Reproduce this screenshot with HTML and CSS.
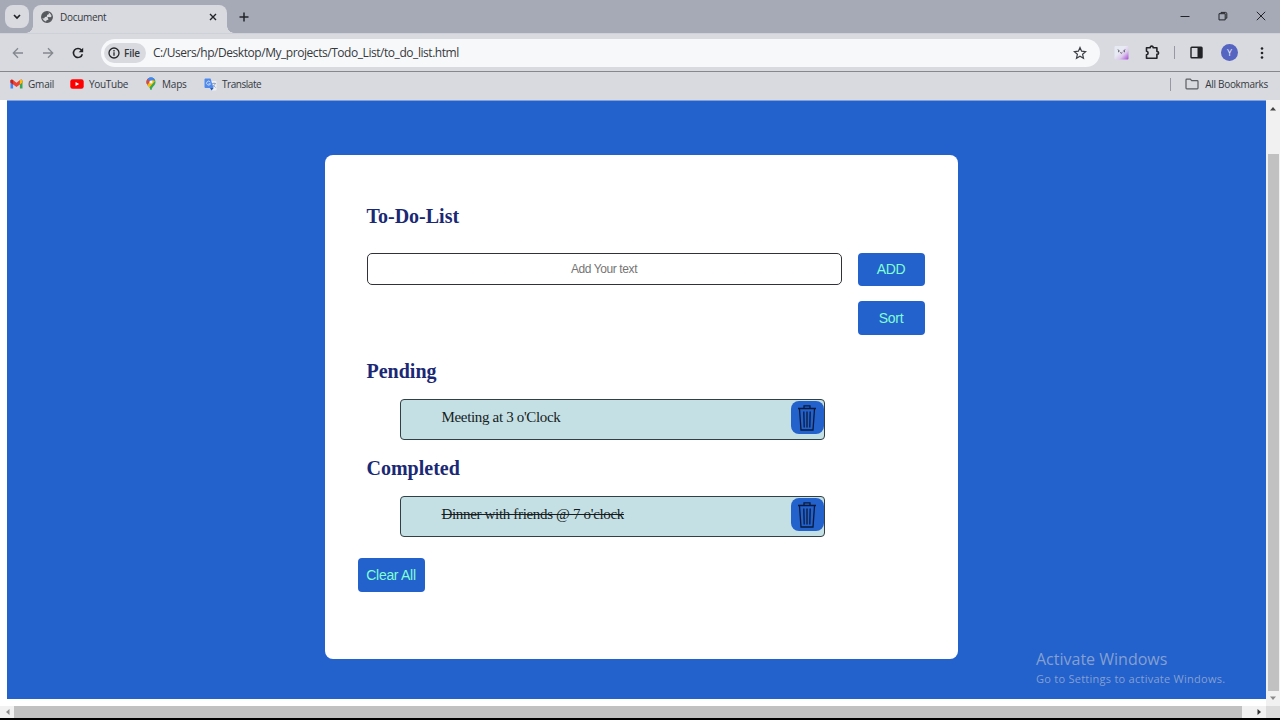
FILE: index.html
```html
<!DOCTYPE html>
<html lang="en">
<head>
<meta charset="utf-8">
<title>Document</title>
<link rel="stylesheet" href="styles.css">
</head>
<body>
<div class="browser">
  <header class="tabstrip">
    <button class="tab-search" aria-label="Search tabs"><svg width="8" height="6" viewBox="0 0 8 6"><path d="M1 1l3 3 3-3" fill="none" stroke="#202226" stroke-width="1.7"/></svg></button>
    <div class="tab">
      <svg class="globe" width="12" height="12" viewBox="0 0 12 12"><circle cx="6" cy="6" r="5.3" fill="#d8dae0" stroke="#56595e" stroke-width="1.3"/><path d="M1 4C3 1 5 .5 7.5 1L8 3 6 4v1.5L4 6 3 7.5 1 7z" fill="#56595e"/><path d="M6.5 6l3 .3L11.3 5 11 8 8 11 5 11.3 5.3 9.5 7.5 8.5z" fill="#56595e"/></svg>
      <span class="tab-title">Document</span>
      <svg width="8" height="8" viewBox="0 0 8 8"><path d="M1 1l6 6M7 1L1 7" stroke="#222428" stroke-width="1.4"/></svg>
    </div>
    <svg class="new-tab" width="10" height="10" viewBox="0 0 10 10"><path d="M5 .5v9M.5 5h9" stroke="#222428" stroke-width="1.5"/></svg>
    <div class="window-controls">
      <svg width="10" height="10" viewBox="0 0 10 10"><path d="M.5 5.5h9" stroke="#222428"/></svg>
      <svg width="10" height="10" viewBox="0 0 10 10"><path d="M1 2.7h6.2v6.2H1zM3 2.5V1.4h4.5q1.3 0 1.3 1.3v4.5H7.5" fill="none" stroke="#222428" stroke-width="1"/></svg>
      <svg width="10" height="10" viewBox="0 0 10 10"><path d="M.8.8l8.4 8.4M9.2.8L.8 9.2" stroke="#222428" stroke-width="1"/></svg>
    </div>
  </header>

  <div class="toolbar">
    <div class="nav">
      <svg width="12" height="12" viewBox="0 0 12 12"><path d="M11 6H1.5M6 1.3L1.3 6 6 10.7" fill="none" stroke="#85888e" stroke-width="1.3"/></svg>
      <svg width="12" height="12" viewBox="0 0 12 12"><path d="M1 6h9.500M6 1.300L10.700 6 6 10.700" fill="none" stroke="#85888e" stroke-width="1.300"/></svg>
      <svg width="12" height="12" viewBox="0 0 12 12"><path d="M10.300 7.200A4.500 4.500 0 1 1 9.500 3.200" fill="none" stroke="#202226" stroke-width="1.600"/><path d="M11.200.8v4.500H6.700z" fill="#202226"/></svg>
    </div>
    <div class="omnibox">
      <span class="file-chip"><svg width="12" height="12" viewBox="0 0 12 12"><circle cx="6" cy="6" r="5" fill="none" stroke="#222428" stroke-width="1.300"/><path d="M6 5.300v3.500M6 3.100v1.300" stroke="#222428" stroke-width="1.300"/></svg><span class="chip-text">File</span></span>
      <span class="url">C:/Users/hp/Desktop/My_projects/Todo_List/to_do_list.html</span>
      <svg class="star" width="14" height="14" viewBox="0 0 14 14"><path d="M7 1.500l1.600 3.700 4 .4-3 2.700.9 4L7 10.200l-3.500 2.100.9-4-3-2.700 4-.4z" fill="none" stroke="#3c3f44" stroke-width="1.200"/></svg>
    </div>
    <div class="actions">
      <svg class="act-ext" width="15" height="15" viewBox="0 0 15 15"><defs><linearGradient id="ext" x1="0" y1="0" x2="1" y2="1"><stop offset=".4" stop-color="#e8eaf3"/><stop offset=".65" stop-color="#dccbed"/><stop offset="1" stop-color="#a445d4"/></linearGradient></defs><rect x=".5" y="1" width="14" height="13.500" rx="1" fill="url(#ext)"/><path d="M4 4.500l1.300 1.700L4 7M11 4.500L9.700 6.200 11 7M6.300 7.500l1 .7 1-.7" fill="none" stroke="#41414b" stroke-width=".9"/></svg>
      <svg class="act-puzzle" width="15" height="15" viewBox="0 0 15 15"><path d="M1.500 2.800h3.800q-.1-1.700 1.400-1.700T8.100 2.800h3.800v3.700q1.700 0 1.700 1.400t-1.700 1.400v4H1.500V9.800q1.600-.2 1.600-1.800T1.500 6.200z" fill="none" stroke="#202226" stroke-width="1.600" stroke-linejoin="round"/></svg>
      <i class="sep"></i>
      <svg class="act-panel" width="13" height="13" viewBox="0 0 13 13"><rect x="1" y="1.200" width="11" height="10.500" rx=".8" fill="none" stroke="#202226" stroke-width="1.400"/><path d="M7.500 1H12v11H7.500z" fill="#202226"/></svg>
      <span class="avatar">Y</span>
      <svg class="act-menu" width="4" height="14" viewBox="0 0 4 14"><g fill="#202226"><circle cx="2" cy="2.500" r="1.300"/><circle cx="2" cy="7" r="1.300"/><circle cx="2" cy="11.500" r="1.300"/></g></svg>
    </div>
  </div>

  <nav class="bookmarks">
    <a class="bookmark gmail"><svg width="13" height="10" viewBox="0 0 13 10"><path d="M.5 2v7.500h2.600V3z" fill="#4285f4"/><path d="M12.500 2v7.500H9.900V3z" fill="#34a853"/><path d="M.5 3.500V1.500Q1.300 0 3 1l3.500 2.800L10 1q1.700-1 2.500.5v2L6.500 8z" fill="#ea4335"/><path d="M9.900 1.100q2-1.100 2.600.5v2L9.900 5.500z" fill="#fbbc04"/><path d="M.5 3.500v-2q.6-1.500 2.600-.4v4.400z" fill="#c5221f"/></svg><span>Gmail</span></a>
    <a class="bookmark youtube"><svg width="14" height="10" viewBox="0 0 14 10"><rect x=".3" y=".2" width="13.400" height="9.600" rx="2.300" fill="#f00"/><path d="M5.500 2.900v4.200L9.200 5z" fill="#fff"/></svg><span>YouTube</span></a>
    <a class="bookmark maps"><svg width="10" height="14" viewBox="0 0 10 14"><defs><clipPath id="pin"><path d="M5 .5A4.500 4.500 0 0 1 9.500 5C9.500 8.500 6 9.500 5.500 13h-1C4 9.500.5 8.500.5 5A4.500 4.500 0 0 1 5 .5z"/></clipPath></defs><g clip-path="url(#pin)"><path d="M0 0h10v14H0z" fill="#34a853"/><path d="M0 8.700L9.500 0H0z" fill="#4285f4"/><path d="M0 0l5 5-4 4-2-3z" fill="#ea4335"/><path d="M2 0h8v2L5 6 2 2z" fill="#4285f4"/><path d="M1 8l5-5 3 1-6 7z" fill="#fbbc04"/></g><circle cx="5" cy="5" r="1.600" fill="#f5f6f8"/></svg><span>Maps</span></a>
    <a class="bookmark translate"><svg width="13" height="13" viewBox="0 0 13 13"><path d="M5 3h6.500q1 0 1 1v7.500q0 1-1 1H7.500z" fill="#eef0f5"/><path d="M8 5.500h4M10 4.500v1M11.300 5.500Q10.500 8 8.500 9M8.700 7l3 2.500" stroke="#8b9ab5" stroke-width=".8" fill="none"/><path d="M1.500.5h5L9.600 10H1.500q-1 0-1-1V1.500q0-1 1-1z" fill="#4f89ec"/><path d="M6 10h3.600l-2 2.500z" fill="#2458b5"/><path d="M6.300 4A2 2 0 1 0 6.500 5.800H4.600" stroke="#d5e3fb" stroke-width=".9" fill="none"/></svg><span>Translate</span></a>
    <i class="sep bm-sep"></i>
    <a class="bookmark all"><svg width="14" height="12" viewBox="0 0 14 12"><path d="M1 10V2q0-.8.8-.8h3.500l1.400 1.500h5.500q.8 0 .8.800V10q0 .8-.8.8H1.800Q1 10.800 1 10z" fill="none" stroke="#5a5d62" stroke-width="1.200"/></svg><span>All Bookmarks</span></a>
  </nav>

  <div class="viewport">
    <main class="page">
      <section class="card">
        <h2 class="title">To-Do-List</h2>
        <div class="entry">
          <input class="entry-input" type="text" placeholder="Add Your text">
          <div class="entry-buttons">
            <button class="btn">ADD</button>
            <button class="btn">Sort</button>
          </div>
        </div>
        <h2 class="pending-title">Pending</h2>
        <div class="task"><span class="task-text">Meeting at 3 o'Clock</span><button class="trash" aria-label="Delete"><svg width="20" height="28" viewBox="0 0 20 28"><path d="M1 4.500h18M2.500 5l1.500 21h12l1.500-21M7 4V1.800h6V4M6.800 7.500l.4 16M10 7.500v16M13.200 7.500l-.4 16" fill="none" stroke="#081a3c" stroke-width="1.300"/></svg></button></div>
        <h2 class="completed-title">Completed</h2>
        <div class="task"><span class="task-text done">Dinner with friends @ 7 o'clock</span><button class="trash" aria-label="Delete"><svg width="20" height="28" viewBox="0 0 20 28"><path d="M1 4.500h18M2.500 5l1.500 21h12l1.500-21M7 4V1.800h6V4M6.800 7.500l.4 16M10 7.500v16M13.200 7.500l-.4 16" fill="none" stroke="#081a3c" stroke-width="1.300"/></svg></button></div>
        <button class="btn clear">Clear All</button>
      </section>
    </main>
    <div class="vscroll">
      <svg width="8" height="5" viewBox="0 0 8 5"><path d="M1 4.500L4 1l3 3.500z" fill="#444"/></svg>
      <div class="vthumb"></div>
      <svg width="8" height="5" viewBox="0 0 8 5"><path d="M1 .5L4 4 7 .5z" fill="#8b8b8b"/></svg>
    </div>
    <div class="hscroll">
      <svg width="5" height="8" viewBox="0 0 5 8"><path d="M4.500 1L1 4l3.500 3z" fill="#8b8b8b"/></svg>
      <div class="hthumb"></div>
      <svg width="5" height="8" viewBox="0 0 5 8"><path d="M.5 1L4 4 .5 7z" fill="#333"/></svg>
    </div>
    <div class="corner"></div>
  </div>
</div>
<aside class="watermark"><div class="wm-title">Activate Windows</div><div class="wm-sub">Go to Settings to activate Windows.</div></aside>
</body>
</html>
```

FILE: styles.css
```css
* { box-sizing: border-box; }
body { margin: 0; overflow: hidden; font-family: "Open Sans", "Noto Sans", sans-serif; color: #35383d; }
button { border: 0; padding: 0; }
svg { display: block; flex: none; }
.browser { width: 1280px; height: 720px; display: flex; flex-direction: column; background: #000; }

.tabstrip { height: 33px; flex: none; display: flex; align-items: flex-start; background: #a6aab6; padding-left: 5px; }
.tab-search { width: 24px; height: 23px; margin-top: 5px; border-radius: 8px; background: #d8dae0; display: flex; align-items: center; justify-content: center; }
.tab { position: relative; width: 194px; height: 28px; margin: 5px 0 0 4px; padding: 0 10px 4px 8px; background: #d8dae0; border-radius: 8px 8px 0 0; display: flex; align-items: center; }
.tab::before, .tab::after { content: ""; position: absolute; bottom: 0; width: 7px; height: 7px; }
.tab::before { left: -7px; background: radial-gradient(circle at 0 0, transparent 6.5px, #d8dae0 7px); }
.tab::after { right: -7px; background: radial-gradient(circle at 100% 0, transparent 6.5px, #d8dae0 7px); }
.tab-title { flex: 1; margin-left: 7px; font-size: 10px; letter-spacing: -0.3px; }
.new-tab { margin: 12px 0 0 12px; }
.window-controls { display: flex; gap: 28px; margin: 11px 14px 0 auto; }

.toolbar { height: 38px; flex: none; display: flex; align-items: center; background: linear-gradient(#a6aab6, #a6aab6); padding: 0; }
.toolbar { background: #d8dae0; padding: 1px 0 0 13px; box-shadow: inset 0 1px #cfd1d8; }
.nav { display: flex; gap: 18px; width: 88px; margin-left: -1px; margin-right: 1px; }
.omnibox { width: 999px; height: 28px; border-radius: 14px; background: #f7f8fa; display: flex; align-items: center; padding: 0 13px 0 3px; }
.file-chip { width: 42px; height: 20px; border-radius: 10px; background: #d8dae0; display: flex; align-items: center; padding-left: 4px; gap: 4px; font-size: 10px; font-weight: 600; }
.chip-text { letter-spacing: -0.2px; }
.url { margin-left: 7px; font-size: 12px; letter-spacing: -0.45px; white-space: nowrap; }
.star { margin-left: auto; }
.actions { display: flex; align-items: center; }
.act-ext { margin-left: 14px; }
.act-puzzle { margin-left: 16px; }
.sep { width: 1px; height: 13px; background: #96999f; }
.actions .sep { margin-left: 14px; }
.act-panel { margin-left: 15px; }
.avatar { width: 17px; height: 17px; margin-left: 18px; border-radius: 50%; background: #5563c1; color: #e7e9f8; font-size: 9px; line-height: 17px; text-align: center; }
.act-menu { margin-left: 22px; }

.bookmarks { height: 29px; flex: none; display: flex; align-items: center; background: #d8dae0; border-top: 1px solid #85878c; padding: 0 12px 4px 10px; font-size: 10px; }
.bookmark { display: flex; align-items: center; white-space: nowrap; letter-spacing: -0.3px; }
.gmail { gap: 5px; width: 60px; letter-spacing: -0.2px; }
.youtube { gap: 5px; width: 76px; }
.maps { gap: 6px; width: 58px; letter-spacing: -0.2px; }
.translate { gap: 5px; letter-spacing: -0.45px; }
.bm-sep { margin-left: auto; }
.all { gap: 6px; margin-left: 14px; }

.viewport { height: 618px; flex: none; display: grid; grid-template-columns: 1266px 14px; grid-template-rows: 606px 12px; background: #fff; }
.page { margin: 0 0 7px 7px; padding: 55px 0 0 317.5px; background: #2361cd; border-top: 1px solid #80a2dc; }
.card { width: 633px; height: 504px; margin-top: -1px; background: #fff; border-radius: 8px; padding: 49px 33px 0 42px; display: flex; flex-direction: column; align-items: flex-start; }
.card h2 { margin: 0; font: bold 20px/24px "Liberation Serif", serif; color: #1a2875; }
.entry { display: flex; justify-content: space-between; width: 558px; margin-top: 25px; height: 82px; }
.entry-input { width: 475px; height: 32px; border: 1px solid #303238; border-radius: 5px; padding: 0; text-align: center; font: 12px "Liberation Sans", sans-serif; letter-spacing: -0.4px; background: #fff; }
.entry-input::placeholder { color: #757575; }
.entry-buttons { display: flex; flex-direction: column; gap: 15px; margin-top: -0.5px; }
.btn { width: 67px; height: 33.5px; flex: none; border-radius: 4px; background: #2361cd; color: #7fffd4; font: 14px "Liberation Sans", sans-serif; letter-spacing: -0.3px; }
.card .pending-title { margin-top: 24px; }
.card .completed-title { margin-top: 16px; }
.task { width: 425px; height: 41.5px; flex: none; margin: 15.5px 0 0 33px; border: 1px solid #304044; border-radius: 4px; background: #c5e0e4; display: flex; justify-content: space-between; padding: 0.5px 0 0 41px; }
.task-text { font: 15px/35px "Liberation Serif", serif; letter-spacing: -0.33px; color: #151d1f; }
.done { text-decoration: line-through; }
.trash { width: 33px; height: 33px; margin-top: 1px; border-radius: 8px; background: #2361cd; display: flex; align-items: center; justify-content: center; }
.clear { margin: 21px 0 0 -9px; }

.vscroll { background: #f1f1f1; display: flex; flex-direction: column; align-items: center; padding: 6px 0 5px; }
.vthumb { width: 11px; height: 537px; margin: 43px 0 auto; background: #c1c1c1; }
.hscroll { background: #f1f1f1; display: flex; align-items: center; padding: 0 4px 0 5px; }
.hthumb { width: 1228px; height: 12px; margin: 0 auto 0 4px; background: #c1c1c1; }
.corner { background: #dcdcdc; }
.watermark { position: absolute; left: 1036px; top: 649px; color: #83a0d0; white-space: nowrap; }
.wm-title { font-size: 16px; line-height: 20px; }
.wm-sub { font-size: 11px; line-height: 20px; letter-spacing: 0.26px; }
```
